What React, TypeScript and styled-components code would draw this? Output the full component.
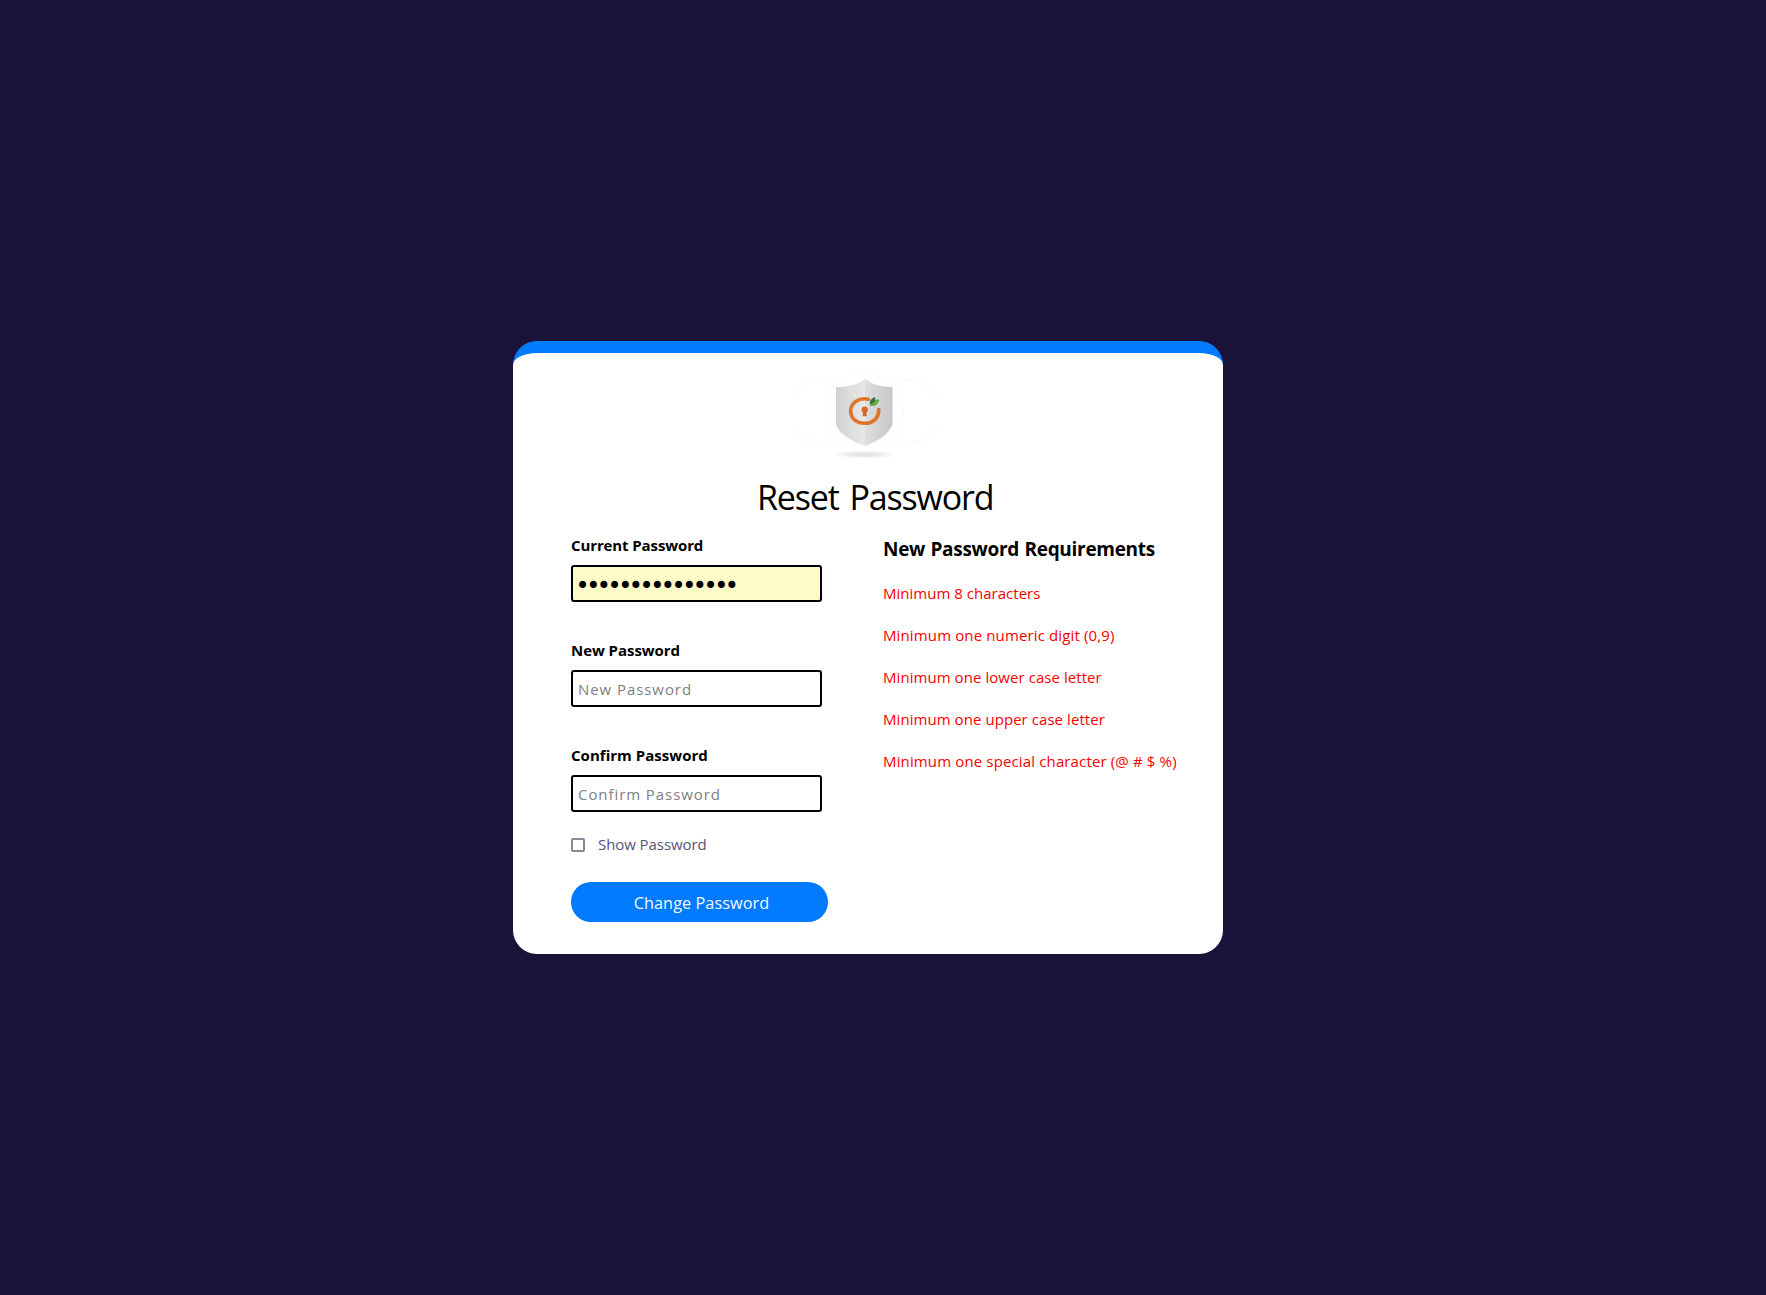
import React from "react";
import styled, { createGlobalStyle } from "styled-components";

const GlobalStyle = createGlobalStyle`
  *, *::before, *::after { box-sizing: border-box; }
  body {
    margin: 0;
    background: #1a1238;
    font-family: "Segoe UI", "Open Sans", "Noto Sans", sans-serif;
    color: #000;
  }
`;

const Page = styled.main`
  min-height: 100vh;
  display: flex;
  justify-content: center;
  align-items: center;
  padding-right: 30px;
`;

const Card = styled.section`
  width: 710px;
  height: 613px;
  padding: 12px 0 0 58px;
  background: #fff;
  border-top: 12px solid #007bff;
  border-radius: 24px;
`;

const Brand = styled.header`
  display: flex;
  flex-direction: column;
  width: 594px;
`;

const Logo = styled.svg`
  width: 144px;
  height: 100px;
  margin-left: 222px;
`;

const Title = styled.h1`
  margin: 7px 0 12px 186px;
  font-size: 34px;
  line-height: 50px;
  font-weight: 400;
  letter-spacing: -1.15px;
  word-spacing: 3px;
  white-space: nowrap;
`;

const Columns = styled.div`
  display: grid;
  grid-template-columns: 257px 1fr;
  column-gap: 55px;
`;

const Form = styled.form`
  display: flex;
  flex-direction: column;
`;

const Field = styled.div`
  display: flex;
  flex-direction: column;
  gap: 9px;
  width: 251px;

  & + & { margin-top: 37px; }
`;

const Label = styled.label<{ $spacing: number }>`
  font-size: 15px;
  line-height: 22px;
  font-weight: 700;
  letter-spacing: ${(p) => p.$spacing}px;
`;

const Input = styled.input<{ $filled?: boolean }>`
  width: 251px;
  height: 37px;
  padding: ${(p) => (p.$filled ? "5px 5px 0 2.5px" : "0 5px")};
  border: 2px solid #000;
  border-radius: 3px;
  outline: none;
  background: ${(p) => (p.$filled ? "#fffbc8" : "#fff")};
  color: #000;
  font-family: ${(p) => (p.$filled ? '"DejaVu Sans", sans-serif' : "inherit")};
  font-size: ${(p) => (p.$filled ? 24 : 15)}px;
  letter-spacing: ${(p) => (p.$filled ? -3.49 : 0.93)}px;

  &::placeholder { color: #808080; opacity: 1; }
`;

const ShowRow = styled.label`
  display: flex;
  align-items: center;
  gap: 13px;
  margin-top: 21px;
  color: #5a5279;
  font-size: 15px;
  line-height: 22px;
  letter-spacing: -0.07px;
`;

const Checkbox = styled.input`
  appearance: none;
  width: 14px;
  height: 14px;
  margin: 2px 0 0;
  border: 2px solid #8b879b;
  border-radius: 2px;
  background: #fff;
`;

const Submit = styled.button`
  width: 257px;
  height: 40px;
  margin-top: 27px;
  padding: 2px 0 0 4px;
  border: 0;
  border-radius: 20px;
  background: #007bff;
  color: #f4f8ff;
  font-family: inherit;
  font-size: 16.3px;
  line-height: 38px;
  letter-spacing: 0.05px;
`;

const Requirements = styled.aside`
  padding-top: 2px;
`;

const RequirementsTitle = styled.h2`
  margin: 0 0 20px;
  font-size: 19px;
  line-height: 26px;
  font-weight: 700;
  letter-spacing: -0.3px;
  word-spacing: 0.8px;
  white-space: nowrap;
`;

const RequirementList = styled.ul`
  display: flex;
  flex-direction: column;
  gap: 20px;
  margin: 0;
  padding: 0;
  list-style: none;
`;

const Requirement = styled.li<{ $spacing: number }>`
  color: #f80000;
  font-size: 15px;
  line-height: 22px;
  letter-spacing: ${(p) => p.$spacing}px;
  white-space: nowrap;
`;

const requirements = [
  { text: "Minimum 8 characters", spacing: 0.02 },
  { text: "Minimum one numeric digit (0,9)", spacing: 0.13 },
  { text: "Minimum one lower case letter", spacing: 0.06 },
  { text: "Minimum one upper case letter", spacing: 0.06 },
  { text: "Minimum one special character (@ # $ %)", spacing: 0.14 },
];

function ShieldLogo() {
  return (
    <Logo viewBox="793 365 144 100" role="img" aria-label="Shield">
      <defs>
        <linearGradient id="left" x1="0" x2="1">
          <stop offset="0" stopColor="#d1d1d1" />
          <stop offset="1" stopColor="#e9e9e9" />
        </linearGradient>
        <linearGradient id="right" x1="0" x2="1">
          <stop offset="0" stopColor="#dfdfdf" />
          <stop offset="1" stopColor="#c6c6c6" />
        </linearGradient>
        <radialGradient id="shadow">
          <stop offset="0" stopColor="#000" stopOpacity="0.12" />
          <stop offset="0.5" stopColor="#000" stopOpacity="0.08" />
          <stop offset="1" stopColor="#000" stopOpacity="0" />
        </radialGradient>
      </defs>
      <g fill="none" stroke="#fbfdfe" strokeWidth="5">
        <circle cx="818.500" cy="411" r="31.500" />
        <circle cx="910.500" cy="411" r="31.500" />
      </g>
      <circle cx="864.5" cy="411" r="39" fill="none" stroke="#f9fcfe" strokeWidth="1" />
      <ellipse cx="865" cy="454.5" rx="32" ry="4" fill="url(#shadow)" />
      <path d="M865 379C857 385 847 387 836 387V424C838 433 851 441 865 446Z" fill="url(#left)" />
      <path d="M865 379C873 385 882 387 892.500 387V424C890 433 879 441 865 446Z" fill="url(#right)" />
      <path d="M868.500 399.200C859 397 850.700 403 850.700 411C850.700 419 857 423.300 865 423.300C873 423.300 879 418 878.700 409.500" fill="none" stroke="#dd732c" strokeWidth="3.600" strokeLinecap="round" />
      <path d="M864.700 406.500a3.300 3.300 0 0 1 1.700 6.100l.5 3.700h-4.400l.5-3.700a3.300 3.300 0 0 1 1.700-6.100Z" fill="#d5672a" />
      <path d="M869.800 405.500C869 400.500 873 397.400 875 397.200L875.200 400C876 399.500 878 399.600 879.500 399.700C878 404 875 407.500 869.800 405.500Z" fill="#65aa43" />
      <path d="M869.800 403.500C869.500 400 873 397.400 875 397.200L875.200 400.500L872 404Z" fill="#2f744f" />
    </Logo>
  );
}

export default function App() {
  return (
    <>
      <GlobalStyle />
      <Page>
        <Card>
          <Brand>
            <ShieldLogo />
            <Title>Reset Password</Title>
          </Brand>
          <Columns>
            <Form onSubmit={(e) => e.preventDefault()}>
              <Field>
                <Label htmlFor="current" $spacing={-0.11}>Current Password</Label>
                <Input id="current" type="password" defaultValue="123456789012345" $filled />
              </Field>
              <Field>
                <Label htmlFor="new" $spacing={-0.05}>New Password</Label>
                <Input id="new" type="password" placeholder="New Password" />
              </Field>
              <Field>
                <Label htmlFor="confirm" $spacing={0.03}>Confirm Password</Label>
                <Input id="confirm" type="password" placeholder="Confirm Password" />
              </Field>
              <ShowRow>
                <Checkbox type="checkbox" />
                Show Password
              </ShowRow>
              <Submit type="submit">Change Password</Submit>
            </Form>
            <Requirements>
              <RequirementsTitle>New Password Requirements</RequirementsTitle>
              <RequirementList>
                {requirements.map((r) => (
                  <Requirement key={r.text} $spacing={r.spacing}>{r.text}</Requirement>
                ))}
              </RequirementList>
            </Requirements>
          </Columns>
        </Card>
      </Page>
    </>
  );
}
